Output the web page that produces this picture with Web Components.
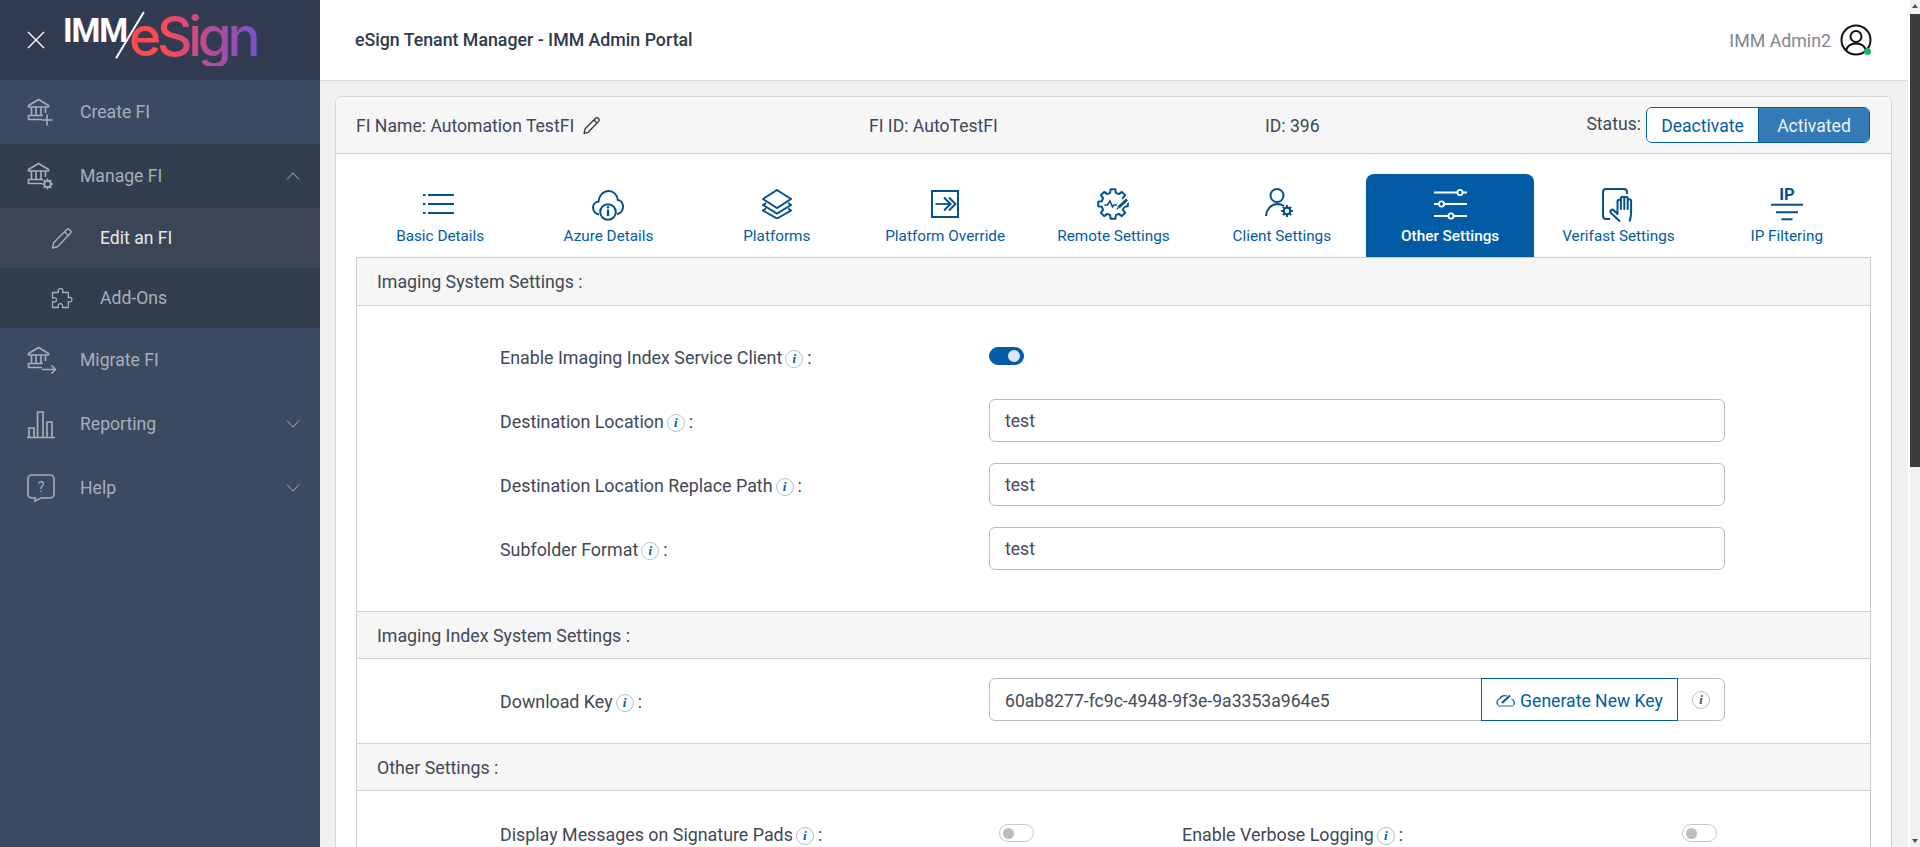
<!DOCTYPE html>
<html lang="en"><head><meta charset="utf-8"><title>eSign Tenant Manager</title>
<style>
html,body{margin:0;padding:0;height:847px;overflow:hidden;background:#fff;font-family:Roboto,"Liberation Sans",sans-serif}
</style></head><body>
<imm-app></imm-app>
<script>
const svg=(w,h,vb,inner,extra='')=>`<svg width="${w}" height="${h}" viewBox="${vb}" fill="none" stroke="currentColor" ${extra}>${inner}</svg>`;
const gear=(cx,cy,ro,ri,n=8)=>{let d='';const st=Math.PI*2/n;for(let i=0;i<n;i++){const a=i*st-Math.PI/2;const pts=[[ri,a-st*.32],[ro,a-st*.2],[ro,a+st*.2],[ri,a+st*.32]];pts.forEach((p,j)=>{d+=(i==0&&j==0?'M':'L')+(cx+p[0]*Math.cos(p[1])).toFixed(2)+' '+(cy+p[0]*Math.sin(p[1])).toFixed(2)})}return d+'z'};
const bank=`<path d="M1.500 7.500 11.500 1.500l10 6v1.500h-20z" stroke-width="1.600" stroke-linejoin="round"/><path d="M4.500 9v8M9 9v8M14 9v8M18.500 9v6" stroke-width="1.600"/><path d="M15 21.500H1.500v-4H16" stroke-width="1.600"/>`;
const ICONS={
 create:svg(28,28,'0 0 28 28',bank+`<path d="M20 16.500v11M14.500 22h11" stroke-width="1.600"/>`),
 manage:svg(28,28,'0 0 28 28',bank+`<path d="${gear(20.500,22,5.500,4)}" fill="currentColor" stroke="none"/><circle cx="20.500" cy="22" r="2.300" fill="#323d50" stroke="none"/>`),
 migrate:svg(30,28,'0 0 30 28',bank+`<path d="M15 23.500h13M24.500 19.500l4 4-4 4" stroke-width="1.500"/>`),
 report:svg(30,30,'0 0 30 30',`<path d="M1 28.500h28M3 28.500v-9.500h5v9.500M11.500 28.500V3h5.500v25.500M21 28.500V13h5v15.500" stroke-width="1.600"/>`,'style="margin-left:-1px"'),
 help:svg(30,30,'0 0 30 30',`<path d="M6 2h18a4 4 0 0 1 4 4v15a4 4 0 0 1-4 4H15l-6 3 .5-3H6a4 4 0 0 1-4-4V6a4 4 0 0 1 4-4z" stroke-width="1.600"/><text x="15" y="18.500" text-anchor="middle" font-size="14" font-family="Roboto" fill="currentColor" stroke="none">?</text>`,'style="margin-left:-1px"'),
 pencil:svg(23,23,'0 0 23 23',`<path d="M2.500 21l1.300-5.500L16.500 2.800a2.300 2.300 0 0 1 3.200 0l.5.5a2.300 2.300 0 0 1 0 3.200L7.500 19.700z" stroke-width="1.400" stroke-linejoin="round"/><path d="M14.500 4.800l3.700 3.700" stroke-width="1.300"/>`),
 pencilS:svg(19,19,'0 0 23 23',`<path d="M2.500 21l1.300-5.500L16.500 2.800a2.300 2.300 0 0 1 3.200 0l.5.5a2.300 2.300 0 0 1 0 3.200L7.500 19.700z" stroke-width="1.600" stroke-linejoin="round"/><path d="M14.500 4.800l3.700 3.700" stroke-width="1.500"/>`),
 puzzle:svg(23,23,'0 0 23 23',`<path d="M8.500 5.500h-6v5.700c2-1.200 4-.5 4 1.600s-2 2.800-4 1.600v6.100h6c-1-2 0-3.800 1.800-3.800s3 1.800 2 3.800h6v-6c2 .9 3.700-.1 3.700-1.900s-1.700-2.900-3.700-1.900V5.500h-5.800c1-2 .3-4-1.900-4s-3.100 2-2.100 4z" stroke-width="1.300" stroke-linejoin="round"/>`),
 list:svg(31,20,'0 0 31 20',`<path d="M0 1h2.500M5 1h26M0 10h2.500M5 10h26M0 19h2.500M5 19h26" stroke-width="2"/>`,'style="margin:0 3px 3px 0"'),
 cloud:svg(32,32,'0 0 32 32',`<path d="M7 25.500C3.500 25 1 22 1 18.800c0-3.500 2.500-6 5.500-6.300C7 7 11 2 16.500 2c5.300 0 8.800 4 9.300 9 3.200.3 5.200 3.300 5.200 6.800 0 3.600-2.500 6.700-6 7.200" stroke-width="2"/><circle cx="16" cy="23" r="7.800" stroke-width="2"/><path d="M16 20.500v6.500" stroke-width="2.400"/><circle cx="16" cy="18.300" r="1.200" fill="currentColor" stroke="none"/>`),
 layers:svg(30,30,'0 0 30 30',`<path d="M15 1 29 10 15 19 1 10z" stroke-width="2"/><path d="M4 14 1 16l14 8.500L29 16l-3-2" stroke-width="2"/><path d="M4 19.500l-3 2 14 8 14-8-3-2" stroke-width="2"/>`,'style="margin-bottom:2px"'),
 override:svg(28,28,'0 0 28 28',`<rect x="1" y="1" width="26" height="26" stroke-width="2"/><path d="M4.500 14h14" stroke-width="1.800"/><path d="M13 7.500l6.500 6.500-6.500 6.500M18 7.500l6.500 6.500-6.500 6.500" stroke-width="2"/>`,'style="margin-bottom:2px"'),
 remote:svg(34,32,'0 0 34 32',`<path d="${gear(17,16,15,11.500)}" stroke-width="2" stroke-linejoin="round"/><path d="M20 21.500 34 9" stroke="#fff" stroke-width="6"/><path d="M8.500 17h3l2.500-4 2.500 6 1.500-2h3" stroke-width="1.500"/><path d="M22.500 19.500 31 11.500" stroke-width="3"/><path d="M21 21.500l1-2" stroke-width="1.500"/>`,'style="margin-bottom:2px"'),
 client:svg(28,31,'0 0 28 31',`<circle cx="12" cy="8.500" r="6.500" stroke-width="2"/><path d="M1 29c.5-7 5-11.500 11-12 3 0 5 .5 7 2" stroke-width="2"/><path d="${gear(22,24,6,4.400)}" fill="currentColor" stroke="none"/><circle cx="22" cy="24" r="2.200" fill="#fff" stroke="none"/>`,'style="margin:0 5px 5px 0"'),
 sliders:svg(33,32,'0 0 33 32',`<path d="M0 4.500h23M29 4.500h4M0 16h4.500M10.500 16H33M0 28h14M20 28h13" stroke-width="1.800"/><circle cx="26" cy="4.500" r="2.600" stroke-width="1.800"/><circle cx="7.500" cy="16" r="2.600" stroke-width="1.800"/><circle cx="17" cy="28" r="2.600" stroke-width="1.800"/>`,'style="margin-bottom:2px"'),
 hand:svg(32,35,'0 0 32 35',`<path d="M8 31H4a3 3 0 0 1-3-3V4a3 3 0 0 1 3-3h18a3 3 0 0 1 3 3v2" stroke-width="2"/><path d="M18 33.500 9 25a1.900 1.900 0 0 1 2.700-2.700L15.500 26V13.500a1.700 1.700 0 0 1 3.400 0V21V10.500a1.700 1.700 0 0 1 3.400 0V21V10.500a1.700 1.700 0 0 1 3.400 0V21V13a1.700 1.700 0 0 1 3.400 0v11c0 4-.6 6.500-1.500 9.500" stroke-width="2" stroke-linejoin="round"/>`),
 ip:svg(34,42,'0 -6 34 42',`<text x="17" y="13" text-anchor="middle" font-size="16.500" font-weight="700" font-family="Roboto" fill="currentColor" stroke="none">IP</text><path d="M1 17.700h32M6 25.300h22M11.500 32.300h11" stroke-width="2"/>`,'style="margin-bottom:6px"'),
 gauge:svg(19,14,'0 0 19 14',`<path d="M2 12C.2 9.500 1 6.500 3.800 5.500 5.200 3 8 2 11 3" stroke-width="1.300"/><path d="M15.500 6c2.800 1 3.500 4 2 6" stroke-width="1.300"/><path d="M6 10 14 2.500" stroke-width="2"/><path d="M2 13h15.500" stroke="#8fb2d0" stroke-width="2"/>`),
 avatar:svg(32,32,'0 0 32 32',`<circle cx="16" cy="16" r="14.500" stroke-width="2"/><circle cx="16" cy="12.500" r="5.500" stroke-width="2"/><path d="M6 26.500c1.500-5 5-7 10-7s8.500 2 10 7" stroke-width="2"/>`),
 up:svg(14,8,'0 0 14 8',`<path d="M1 7.500l6-6.500 6 6.500" stroke-width="1"/>`),
 down:svg(14,8,'0 0 14 8',`<path d="M1 .5l6 6.500 6-6.500" stroke-width="1"/>`)
};
const el=(name,html,css='')=>customElements.define(name,class extends HTMLElement{
 constructor(){super();this.attachShadow({mode:'open'})}
 connectedCallback(){const a=n=>this.getAttribute(n)||'';this.shadowRoot.innerHTML=`<style>${css}</style>`+html(a,this)}
});

el('imm-logo',()=>`<span class="imm">IMM</span><span class="slash"></span><span class="es">eSign</span>`,
`:host{display:block;position:relative;width:200px;height:60px;flex:none}
.imm{position:absolute;left:-1px;top:2px;font:700 33px/38px Roboto,sans-serif;color:#fff;letter-spacing:-1.200px}
.slash{position:absolute;left:65px;top:-2px;width:1.500px;height:54px;background:#fff;transform:rotate(31deg);transform-origin:center}
.es{position:absolute;left:65px;top:-4px;font:500 55px/60px Inter,Roboto,sans-serif;letter-spacing:-4.300px;background:linear-gradient(90deg,#ff4a50 0,#ff4a55 25%,#b44d9a 62%,#6f53d0 100%);-webkit-background-clip:text;background-clip:text;color:transparent;padding-right:6px;z-index:0}`);

el('nav-item',(a)=>`<span class="ic">${ICONS[a('icon')]}</span><span class="t"><slot></slot></span>${a('chev')?`<span class="ch">${ICONS[a('chev')]}</span>`:''}`,
`:host{display:flex;align-items:center;height:64px;padding-left:27px;box-sizing:border-box;color:#a9afba;font-size:17.600px;background:var(--bg,transparent)}
:host([sub]){height:60px;padding-left:50px}
:host([current]){color:#e6eaf0}
.ic{width:53px;display:flex;color:#a9afba}:host([sub]) .ic{width:50px}
.t{flex:1}.ch{margin-right:20px;display:flex;color:#a9afba}`);

el('side-nav',()=>`<div class="logo"><svg width="18" height="18" viewBox="0 0 18 18" stroke="#fff" stroke-width="1.300"><path d="M1 1l16 16M17 1 1 17"/></svg><imm-logo></imm-logo></div><slot></slot>`,
`:host{display:block;width:320px;flex:none;background:#3c4a61;height:847px}
.logo{height:80px;background:#313c52;display:flex;align-items:center;padding-left:27px;gap:19px;box-sizing:border-box}`);

el('top-bar',()=>`<span class="title">eSign Tenant Manager - IMM Admin Portal</span><span class="user">IMM Admin2</span><span class="av">${ICONS.avatar}<i></i></span>`,
`:host{display:flex;align-items:center;height:81px;box-sizing:border-box;border-bottom:1px solid #d9dde2;background:#fff;padding-left:35px;padding-right:36px;flex:none}
.title{font-weight:500;font-size:17.750px;color:#2f3a4b;flex:1}
.user{color:#808890;font-size:17.800px;margin-right:9px}
.av{position:relative;display:flex;color:#111}
i{position:absolute;right:1px;bottom:1px;width:7px;height:7px;border-radius:50%;background:#23b35a}`);

el('status-switch',()=>`<span class="off">Deactivate</span><span class="on">Activated</span>`,
`:host{display:flex;height:36px;box-sizing:border-box;border:1px solid #015ca5;border-radius:6px;overflow:hidden;font-size:17.600px}
span{display:flex;align-items:center;justify-content:center;padding-top:2px;box-sizing:border-box}
.off{width:112px;background:#fff;color:#015ca5;border-right:1px solid #015ca5}
.on{width:110px;background:#337ab7;color:#eef3f8}`);

el('card-head',()=>`<span class="a"><span>FI Name: Automation TestFI</span>${ICONS.pencilS}</span><span class="b">FI ID: AutoTestFI</span><span class="c">ID: 396</span><span class="d">Status:</span><status-switch></status-switch>`,
`:host{display:flex;align-items:center;height:57px;box-sizing:border-box;border-bottom:1px solid #ccc;background:#f6f6f6;padding:0 21px 0 20px;color:#3f4856;font-size:17.600px;border-radius:6px 6px 0 0}
.a{width:513px;display:flex;align-items:center;gap:8px}.a span,.b,.c{padding-top:2px}
.b{width:396px}.c{flex:1}.d{margin-right:5px;margin-top:-2px}
svg{color:#333}`);

el('tab-item',(a)=>`<span class="ic">${ICONS[a('icon')]}</span><span class="l"><slot></slot></span>`,
`:host{flex:1 1 0;height:83px;display:flex;flex-direction:column;align-items:center;color:#015ca5;font-size:15.300px;border-radius:8px 8px 0 0}
:host([active]){background:#015ca5;color:#fff;font-weight:500}
.ic{height:36px;margin-top:13px;display:flex;align-items:center;justify-content:center;color:#05518e}
:host([active]) .ic{color:#fff}
.l{margin-top:4px;line-height:18px}`);

el('tab-strip',()=>`<slot></slot>`,`:host{display:flex;border-bottom:1px solid #ccc;height:84px;box-sizing:border-box}`);

el('section-head',()=>`<slot></slot>`,
`:host{display:flex;align-items:center;height:47px;box-sizing:border-box;background:#f6f6f6;border-bottom:1px solid #d2d2d2;padding-left:20px;font-size:17.800px;color:#3f4856;padding-top:1px}
:host([first]){height:48px;padding-top:0}`);

el('info-tip',()=>`<span>i</span>`,
`:host{display:inline-flex;width:18px;height:18px;box-sizing:border-box;border:1px solid #a9c3d9;border-radius:50%;align-items:center;justify-content:center;vertical-align:1px;margin:0 4px 0 3px}
span{font:italic 700 13px/1 "Liberation Serif",serif;color:var(--tip,#015ca5)}`);

el('field-label',()=>`<slot></slot><info-tip></info-tip><span>:</span>`,
`:host{display:block;font-size:17.850px;color:#3f4856;white-space:nowrap;padding-top:3px}`);

el('toggle-switch',()=>`<b></b>`,
`:host{display:inline-flex;align-items:center;width:35px;height:18px;box-sizing:border-box;border-radius:9px;border:1px solid #c8c8c8;background:#fff;padding:0 3px}
b{width:11px;height:11px;border-radius:50%;background:#bdbdc2}
:host([on]){background:#015ca5;border-color:#015ca5;justify-content:flex-end}
:host([on]) b{background:#dde6f0;width:12px;height:12px}`);

el('text-box',()=>`<slot></slot>`,
`:host{display:flex;align-items:center;width:736px;height:43px;box-sizing:border-box;border:1px solid #bcbcc2;border-radius:6px;padding:2px 0 0 15px;font-size:17.600px;color:#444b55;background:#fff}`);

el('key-box',()=>`<span class="v"><slot></slot></span><span class="btn">${ICONS.gauge}<span>Generate New Key</span></span><span class="tip"><info-tip style="--tip:#555;margin:0"></info-tip></span>`,
`:host{display:flex;align-items:stretch;width:736px;height:43px;box-sizing:border-box;border:1px solid #bcbcc2;border-radius:6px;font-size:17.600px;color:#444b55;background:#fff}
.v{flex:1;display:flex;align-items:center;padding:3px 0 0 15px}
.btn{width:197px;box-sizing:border-box;border:1px solid #015ca5;margin:-1px 0;display:flex;align-items:center;justify-content:center;gap:5px;color:#015ca5;padding-top:3px}
.btn svg{margin-top:-3px}
.tip{width:46px;display:flex;align-items:center;justify-content:center}`);

el('form-row',()=>`<div class="l"><slot name="label"></slot></div><div class="c"><slot></slot></div>`,
`:host{display:grid;grid-template-columns:489px 736px;height:64px;align-items:center;padding-left:143px}
.c{display:flex;align-items:center}`);

el('pair-row',()=>`<slot></slot>`,
`:host{display:grid;grid-template-columns:499px 183px 500px auto;height:64px;align-items:center;padding-left:143px}`);

el('imm-scrollbar',()=>`<span class="au"></span><span class="thumb"></span><span class="rest"></span><span class="ad"></span>`,
`:host{display:flex;flex-direction:column;width:10px;height:847px;flex:none;background:#f1f1f1;margin-left:2px;align-items:center}
.au,.ad{width:0;height:0;border:3px solid transparent;flex:none}
.au{border-bottom:4px solid #505050;border-top:0;margin:4px 0 6px}
.ad{border-top:4px solid #505050;border-bottom:0;margin:6px 0 4px}
.thumb{width:10px;height:453px;background:#3c3c3c;flex:none}.rest{flex:1}`);

el('imm-app',()=>`
<side-nav>
 <nav-item icon="create" style="--bg:#3b4a62">Create FI</nav-item>
 <nav-item icon="manage" chev="up" style="--bg:#323d50">Manage FI</nav-item>
 <nav-item icon="pencil" sub current style="--bg:#3c4555">Edit an FI</nav-item>
 <nav-item icon="puzzle" sub style="--bg:#323d50">Add-Ons</nav-item>
 <nav-item icon="migrate">Migrate FI</nav-item>
 <nav-item icon="report" chev="down">Reporting</nav-item>
 <nav-item icon="help" chev="down">Help</nav-item>
</side-nav>
<main>
 <top-bar></top-bar>
 <div class="content">
  <div class="card">
   <card-head></card-head>
   <div class="body">
    <tab-strip>
     <tab-item icon="list">Basic Details</tab-item>
     <tab-item icon="cloud">Azure Details</tab-item>
     <tab-item icon="layers">Platforms</tab-item>
     <tab-item icon="override">Platform Override</tab-item>
     <tab-item icon="remote">Remote Settings</tab-item>
     <tab-item icon="client">Client Settings</tab-item>
     <tab-item icon="sliders" active>Other Settings</tab-item>
     <tab-item icon="hand">Verifast Settings</tab-item>
     <tab-item icon="ip">IP Filtering</tab-item>
    </tab-strip>
    <div class="panel">
     <section-head first>Imaging System Settings :</section-head>
     <div class="sec s1">
      <form-row><field-label slot="label">Enable Imaging Index Service Client</field-label><toggle-switch on></toggle-switch></form-row>
      <form-row><field-label slot="label">Destination Location</field-label><text-box>test</text-box></form-row>
      <form-row><field-label slot="label">Destination Location Replace Path</field-label><text-box>test</text-box></form-row>
      <form-row><field-label slot="label">Subfolder Format</field-label><text-box>test</text-box></form-row>
     </div>
     <section-head>Imaging Index System Settings :</section-head>
     <div class="sec s2">
      <form-row><field-label slot="label" style="padding-top:4px">Download Key</field-label><key-box>60ab8277-fc9c-4948-9f3e-9a3353a964e5</key-box></form-row>
     </div>
     <section-head>Other Settings :</section-head>
     <div class="sec s3">
      <pair-row><field-label>Display Messages on Signature Pads</field-label><toggle-switch></toggle-switch><field-label>Enable Verbose Logging</field-label><toggle-switch></toggle-switch></pair-row>
     </div>
    </div>
   </div>
  </div>
 </div>
</main>
<imm-scrollbar></imm-scrollbar>`,
`:host{display:flex;height:847px;overflow:hidden}
main{flex:1;min-width:0;display:flex;flex-direction:column;background:#f0f0f0}
.content{flex:1;min-height:0;overflow:hidden;padding:15px 16px 0 15px}
.card{background:#fff;border:1px solid #d5d5d5;border-radius:6px;min-height:900px;box-sizing:border-box}
.body{padding:20px 20px 0 20px}
.panel{border:1px solid #ccc;border-top:0}
.sec{background:#fff;border-bottom:1px solid #d2d2d2}
.s1{padding:18px 0 31px}.s2{padding:8.500px 0 11.500px}.s3{padding:10px 0;border-bottom:0}`);
</script>
</body></html>
